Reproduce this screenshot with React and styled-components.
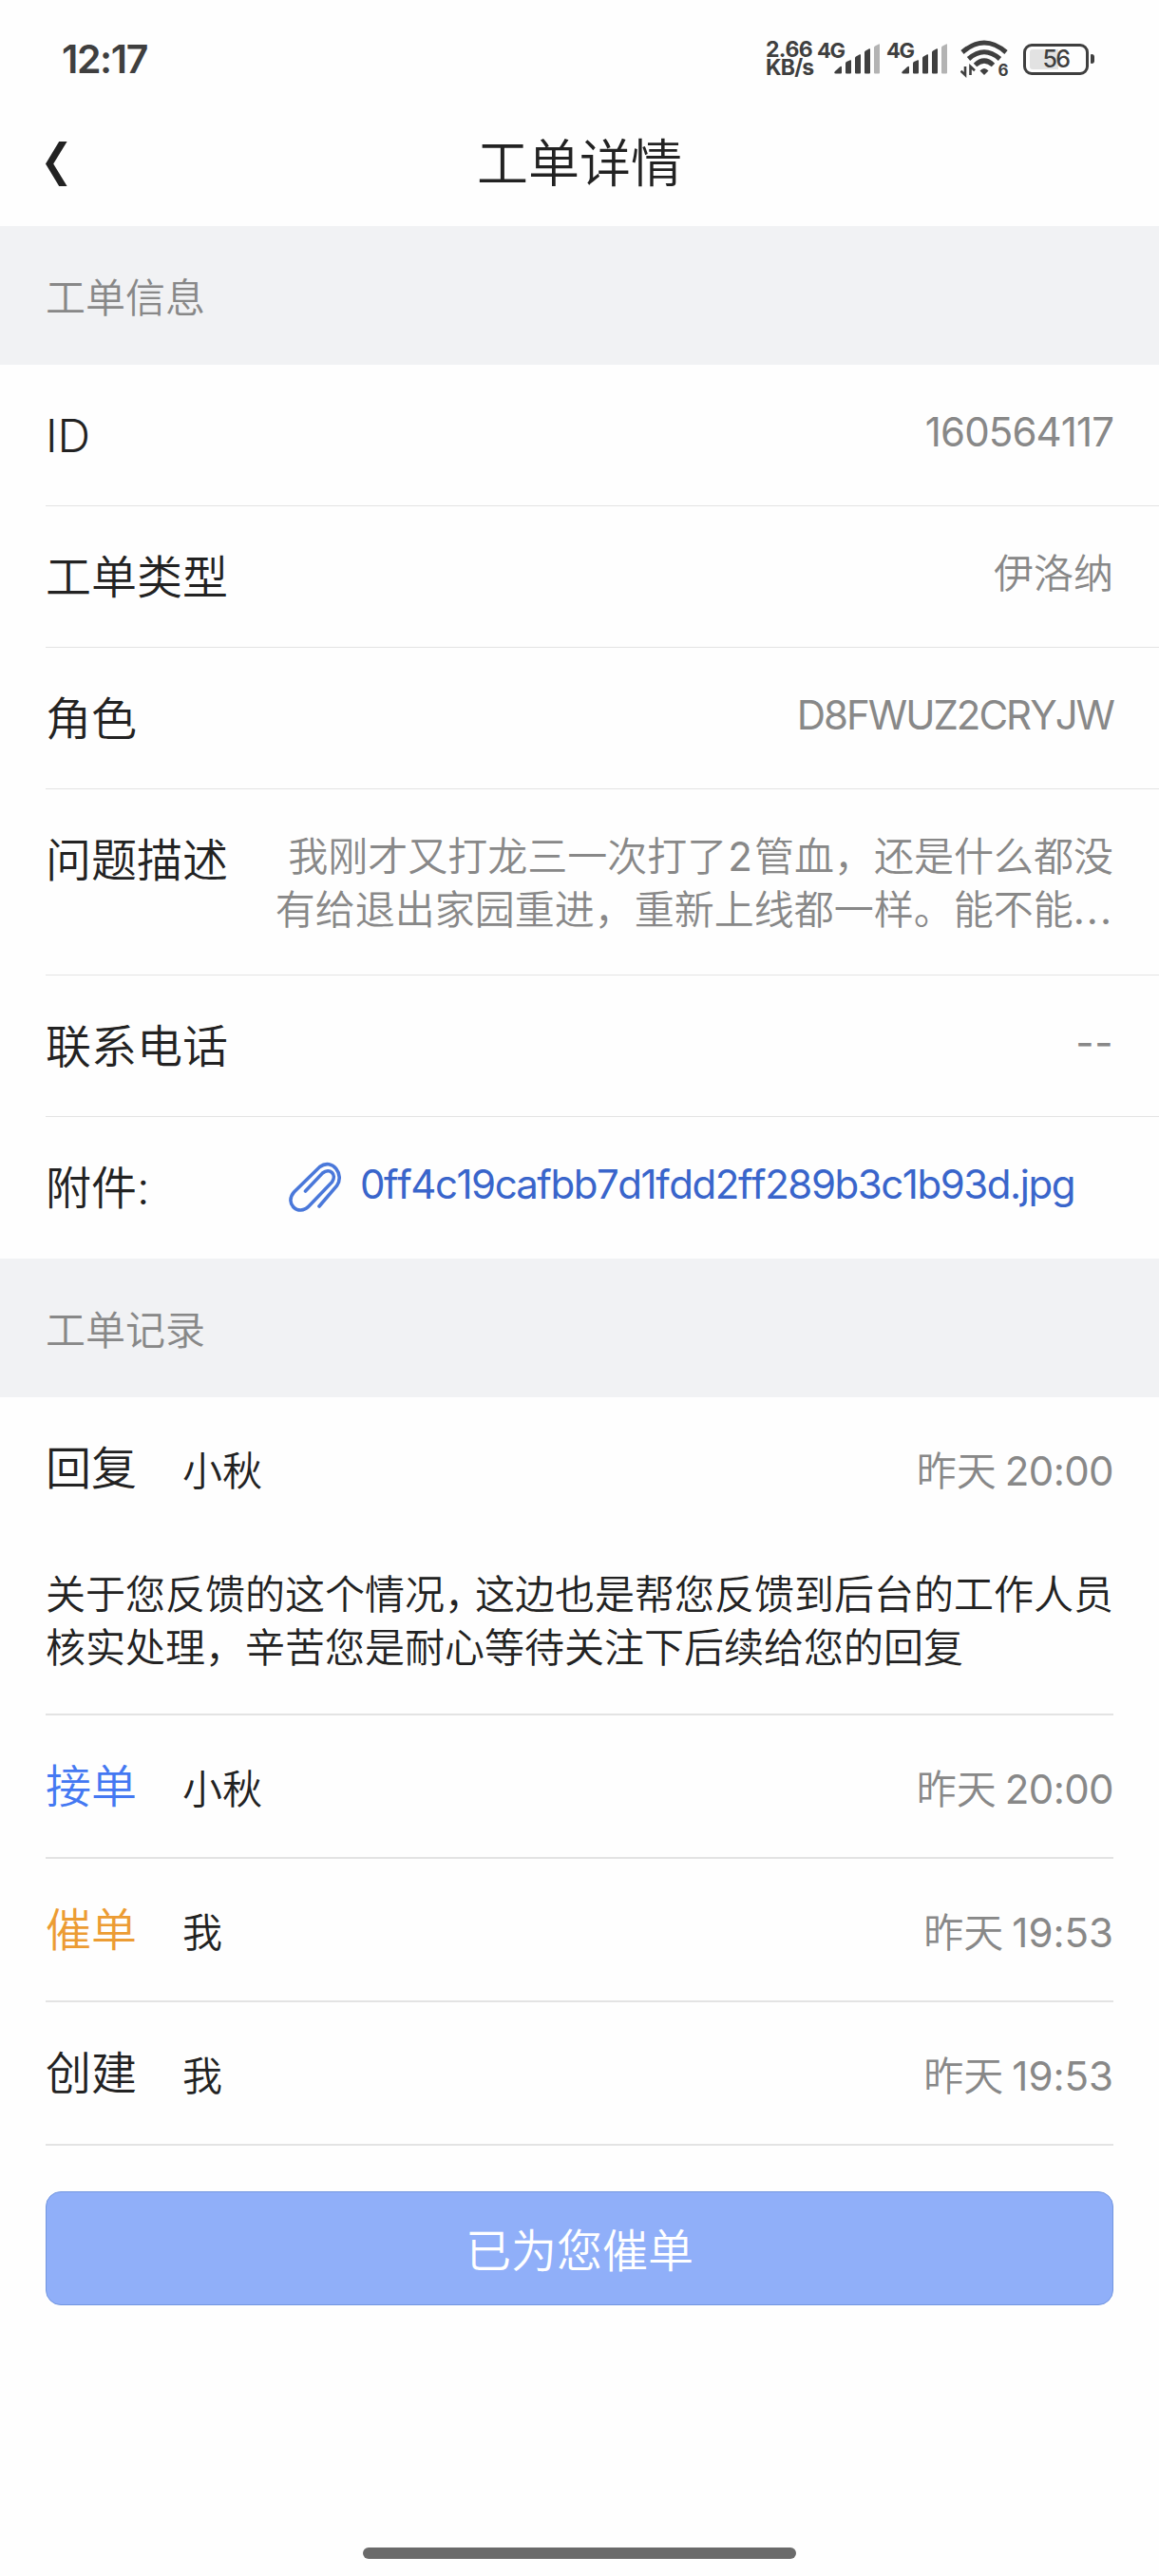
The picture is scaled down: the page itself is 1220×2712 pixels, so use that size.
import React from 'react'
import styled, { createGlobalStyle } from 'styled-components'

const records = [
   { type: '接单', color: '#4478f2', name: '小秋', time: '20:00' },
   { type: '催单', color: '#ec9c33', name: '我', time: '19:53' },
   { type: '创建', name: '我', time: '19:53' },
]

const BackIcon = () => (
   <svg width="23" height="47" viewBox="0 0 23 47">
      <path d="M14.2 0H22.6L8.2 23.4L22.6 47H14.2L0 23.4Z" fill="#222" />
   </svg>
)

const SignalIcon = () => (
   <svg width="49" height="32" viewBox="0 0 49 32" fill="#3f3f3f">
      <path d="M1 29L6 24.500Q8 23 8 25V30.500Q8 31.500 7 31.500H2Q-1 31.500 1 29Z" />
      <path d="M12 20.500Q12 19.500 13 19L17 17.300Q18 17 18 18V30.500Q18 31.500 17 31.500H13Q12 31.500 12 30.500Z" />
      <path d="M22 15Q22 14 23 13.400L27 11.300Q28 11 28 12V30.500Q28 31.500 27 31.500H23Q22 31.500 22 30.500Z" />
      <path d="M32 9Q32 8 33 7.400L37 5.300Q38 5 38 6V30.500Q38 31.500 37 31.500H33Q32 31.500 32 30.500Z" />
      <path d="M42 4Q42 3 43 2.400L47 .4Q48 0 48 1V30.500Q48 31.500 47 31.500H43Q42 31.500 42 30.500Z" fill="#b3b3b3" />
   </svg>
)

const WifiIcon = () => (
   <svg width="54" height="42" viewBox="0 -1 54 42">
      <g fill="none" stroke="#3f3f3f" strokeWidth="5">
         <path d="M2 13Q25 -7 48 13" />
         <path d="M8.500 20Q25 5.500 41.500 20" />
         <path d="M15.500 26.500Q25 17.500 34.500 26.500" />
      </g>
      <path d="M25 37L20.500 32.500Q25 27.500 29.500 32.500Z" fill="#3f3f3f" />
      <path d="M5 28V37L.5 32.800M10.500 37V28L15 32.200" fill="none" stroke="#3f3f3f" strokeWidth="2.600" />
      <text x="39.500" y="38" fontFamily="Inter" fontSize="17" fontWeight="700" fill="#3f3f3f">6</text>
   </svg>
)

const ClipIcon = () => (
   <svg width="58" height="54" viewBox="0 0 58 54" fill="none" stroke="#4a78da" strokeWidth="3.600" strokeLinecap="round">
      <path d="M33 47L51.500 25.500C60 14 47 -4.500 33.500 5.500L6.500 32C-4 44 11 58 22 47L46.500 21.500C52 13 44 6 36.500 12L18.500 31" />
   </svg>
)

const Detail = ({ label, spacing, tall, children }) => (
   <Row $tall={tall}>
      <Label>{label}</Label>
      <Value $spacing={spacing}>{children}</Value>
   </Row>
)

const RecordHead = ({ type, color, name, time }) => (
   <Head>
      <Type $color={color}>{type}</Type>
      <Name>{name}</Name>
      <Time>
         昨天<Clock $loose={time.startsWith('1')}>{time}</Clock>
      </Time>
   </Head>
)

const App = () => {
   return (
      <Page>
         <GlobalStyle />
         <StatusBar>
            <StatusTime>12:17</StatusTime>
            <Speed>
               <span>2.66</span>
               <span>KB/s</span>
            </Speed>
            <Network>4G</Network>
            <SignalIcon />
            <Network $second>4G</Network>
            <SignalIcon />
            <Wifi>
               <WifiIcon />
            </Wifi>
            <Battery>
               <Level>56</Level>
            </Battery>
            <BatteryTip />
         </StatusBar>

         <NavBar>
            <Back aria-label="返回">
               <BackIcon />
            </Back>
            <Title>工单详情</Title>
         </NavBar>

         <Section>工单信息</Section>
         <List>
            <Detail label="ID" spacing={-0.9}>160564117</Detail>
            <Detail label="工单类型">伊洛纳</Detail>
            <Detail label="角色" spacing={-2}>D8FWUZ2CRYJW</Detail>
            <Detail label="问题描述" tall>
               <Line>我刚才又打龙三一次打了<Digit>2</Digit>管血，还是什么都没</Line>
               <Line>有给退出家园重进，重新上线都一样。能不能<Dots>...</Dots></Line>
            </Detail>
            <Detail label="联系电话" spacing={0.5}>--</Detail>
            <Row $last>
               <Label>附件:</Label>
               <Attachment href="#">
                  <ClipIcon />
                  <FileName>0ff4c19cafbb7d1fdd2ff289b3c1b93d.jpg</FileName>
               </Attachment>
            </Row>
         </List>

         <Section>工单记录</Section>
         <Records>
            <Record>
               <RecordHead type="回复" name="小秋" time="20:00" />
               <Reply>
                  <Line>关于您反馈的这个情况<Comma>，</Comma>这边也是帮您反馈到后台的工作人员</Line>
                  <Line>核实处理，辛苦您是耐心等待关注下后续给您的回复</Line>
               </Reply>
            </Record>
            {records.map((r) => (
               <Record key={r.type}>
                  <RecordHead {...r} />
               </Record>
            ))}
         </Records>
         <Urge>已为您催单</Urge>
         <HomeBar />
      </Page>
   )
}

const GlobalStyle = createGlobalStyle`
   body{
      margin: 0;
      background-color: #fefefe;
   }
   *{
      box-sizing: border-box;
   }
`;

const Page = styled.div`
   width: 1220px;
   height: 2712px;
   display: flex;
   flex-direction: column;
   overflow: hidden;
   background-color: #fefefe;
   color: #222;
   font-family: Inter, 'Noto Sans CJK SC', sans-serif;
   font-weight: 350;
   font-size: 42px;
   line-height: 56px;
   font-kerning: none;
   font-variant-ligatures: none;
`;

const StatusBar = styled.div`
   height: 124px;
   padding-left: 65px;
   display: flex;
   align-items: center;
   color: #3f3f3f;

   svg{
      flex-shrink: 0;
   }
`;

const StatusTime = styled.div`
   width: 741px;
   font-size: 41px;
   font-weight: 600;
   letter-spacing: -1.4px;
   line-height: 50px;
`;

const Speed = styled.div`
   width: 56px;
   display: flex;
   flex-direction: column;
   font-size: 23px;
   font-weight: 700;
   line-height: 19px;
   letter-spacing: -0.8px;
`;

const Network = styled.div`
   width: ${props => props.$second ? 28 : 17}px;
   margin-left: ${props => props.$second ? 6 : -2}px;
   margin-right: ${props => props.$second ? -12 : 1}px;
   margin-bottom: 19px;
   font-size: 22px;
   font-weight: 700;
   line-height: 22px;
   letter-spacing: -1.5px;
`;

const Wifi = styled.div`
   margin-left: 13px;
   display: flex;
`;

const Battery = styled.div`
   width: 69px;
   height: 33px;
   margin-left: 12px;
   padding: 3px 4px;
   border: 3px solid #3f3f3f;
   border-radius: 9px;
`;

const Level = styled.div`
   height: 21px;
   border-radius: 3px;
   background: linear-gradient(to right, #e2e2e2 30px, transparent 30px);
   font-size: 25px;
   font-weight: 500;
   line-height: 21px;
   text-align: center;
   letter-spacing: -1.5px;
`;

const BatteryTip = styled.div`
   width: 4px;
   height: 10px;
   margin-left: 2px;
   border-radius: 1px 3px 3px 1px;
   background-color: #3f3f3f;
`;

const NavBar = styled.header`
   height: 114px;
   padding: 0 48px 18px;
   display: grid;
   grid-template-columns: 100px 1fr 100px;
   align-items: center;
`;

const Back = styled.button`
   padding: 0;
   border: 0;
   background: none;
   display: flex;
`;

const Title = styled.h1`
   margin: 0;
   padding-top: 2px;
   font-size: 54px;
   font-weight: 350;
   line-height: 64px;
   text-align: center;
`;

const Section = styled.h2`
   height: 146px;
   margin: 0;
   padding: 6px 48px 0;
   display: flex;
   align-items: center;
   flex-shrink: 0;
   background-color: #f1f2f4;
   color: #888;
   font-size: 42px;
   font-weight: 350;
`;

const List = styled.div`
   padding-left: 48px;
`;

const Row = styled.div`
   height: ${props => props.$tall ? 196 : 149}px;
   padding: 43px 48px 0 0;
   display: flex;
   justify-content: space-between;
   border-bottom: ${props => props.$last ? 0 : 1}px solid #e3e3e3;
`;

const Label = styled.div`
   font-size: 48px;
   line-height: 64px;
   white-space: nowrap;
`;

const Value = styled.div`
   color: #888;
   font-weight: ${props => props.$spacing ? 400 : 350};
   text-align: right;
   letter-spacing: ${props => props.$spacing || 0}px;
`;

const Line = styled.div`
   white-space: nowrap;
`;

const Digit = styled.span`
   margin: 0 2px 0 1px;
   font-weight: 400;
`;

const Dots = styled.span`
   font-weight: 400;
   letter-spacing: 2px;
`;

const Attachment = styled.a`
   width: 868px;
   display: flex;
   color: #3965cb;
   text-decoration: none;

   svg{
      margin: 4px 18px 0 -1px;
      flex-shrink: 0;
   }
`;

const FileName = styled.span`
   font-weight: 400;
   letter-spacing: -1.45px;
`;

const Records = styled.div`
   padding: 0 48px;
`;

const Record = styled.div`
   border-bottom: 2px solid #e3e3e3;
`;

const Head = styled.div`
   height: 149px;
   display: flex;
   align-items: center;
`;

const Type = styled.div`
   width: 144px;
   color: ${props => props.$color || '#222'};
   font-size: 48px;
   line-height: 64px;
`;

const Name = styled.div`
   padding-top: 6px;
`;

const Time = styled.div`
   margin-left: auto;
   padding-top: 6px;
   color: #888;
`;

const Clock = styled.span`
   margin-left: 9px;
   font-weight: 400;
   letter-spacing: ${props => props.$loose ? 0 : -0.6}px;
`;

const Reply = styled.div`
   padding: 31px 0 41px;
`;

const Comma = styled.span`
   letter-spacing: -10px;
`;

const Urge = styled.button`
   height: 120px;
   margin: 48px 48px 0;
   padding: 0 0 2px;
   border: 1px solid #7397e0;
   border-radius: 16px;
   background-color: #90aff9;
   color: #fff;
   font-family: inherit;
   font-size: 48px;
   font-weight: 350;
   flex-shrink: 0;
`;

const HomeBar = styled.div`
   width: 456px;
   height: 12px;
   margin: auto auto 18px;
   border-radius: 6px;
   background-color: #6a6a6a;
`;

export default App
